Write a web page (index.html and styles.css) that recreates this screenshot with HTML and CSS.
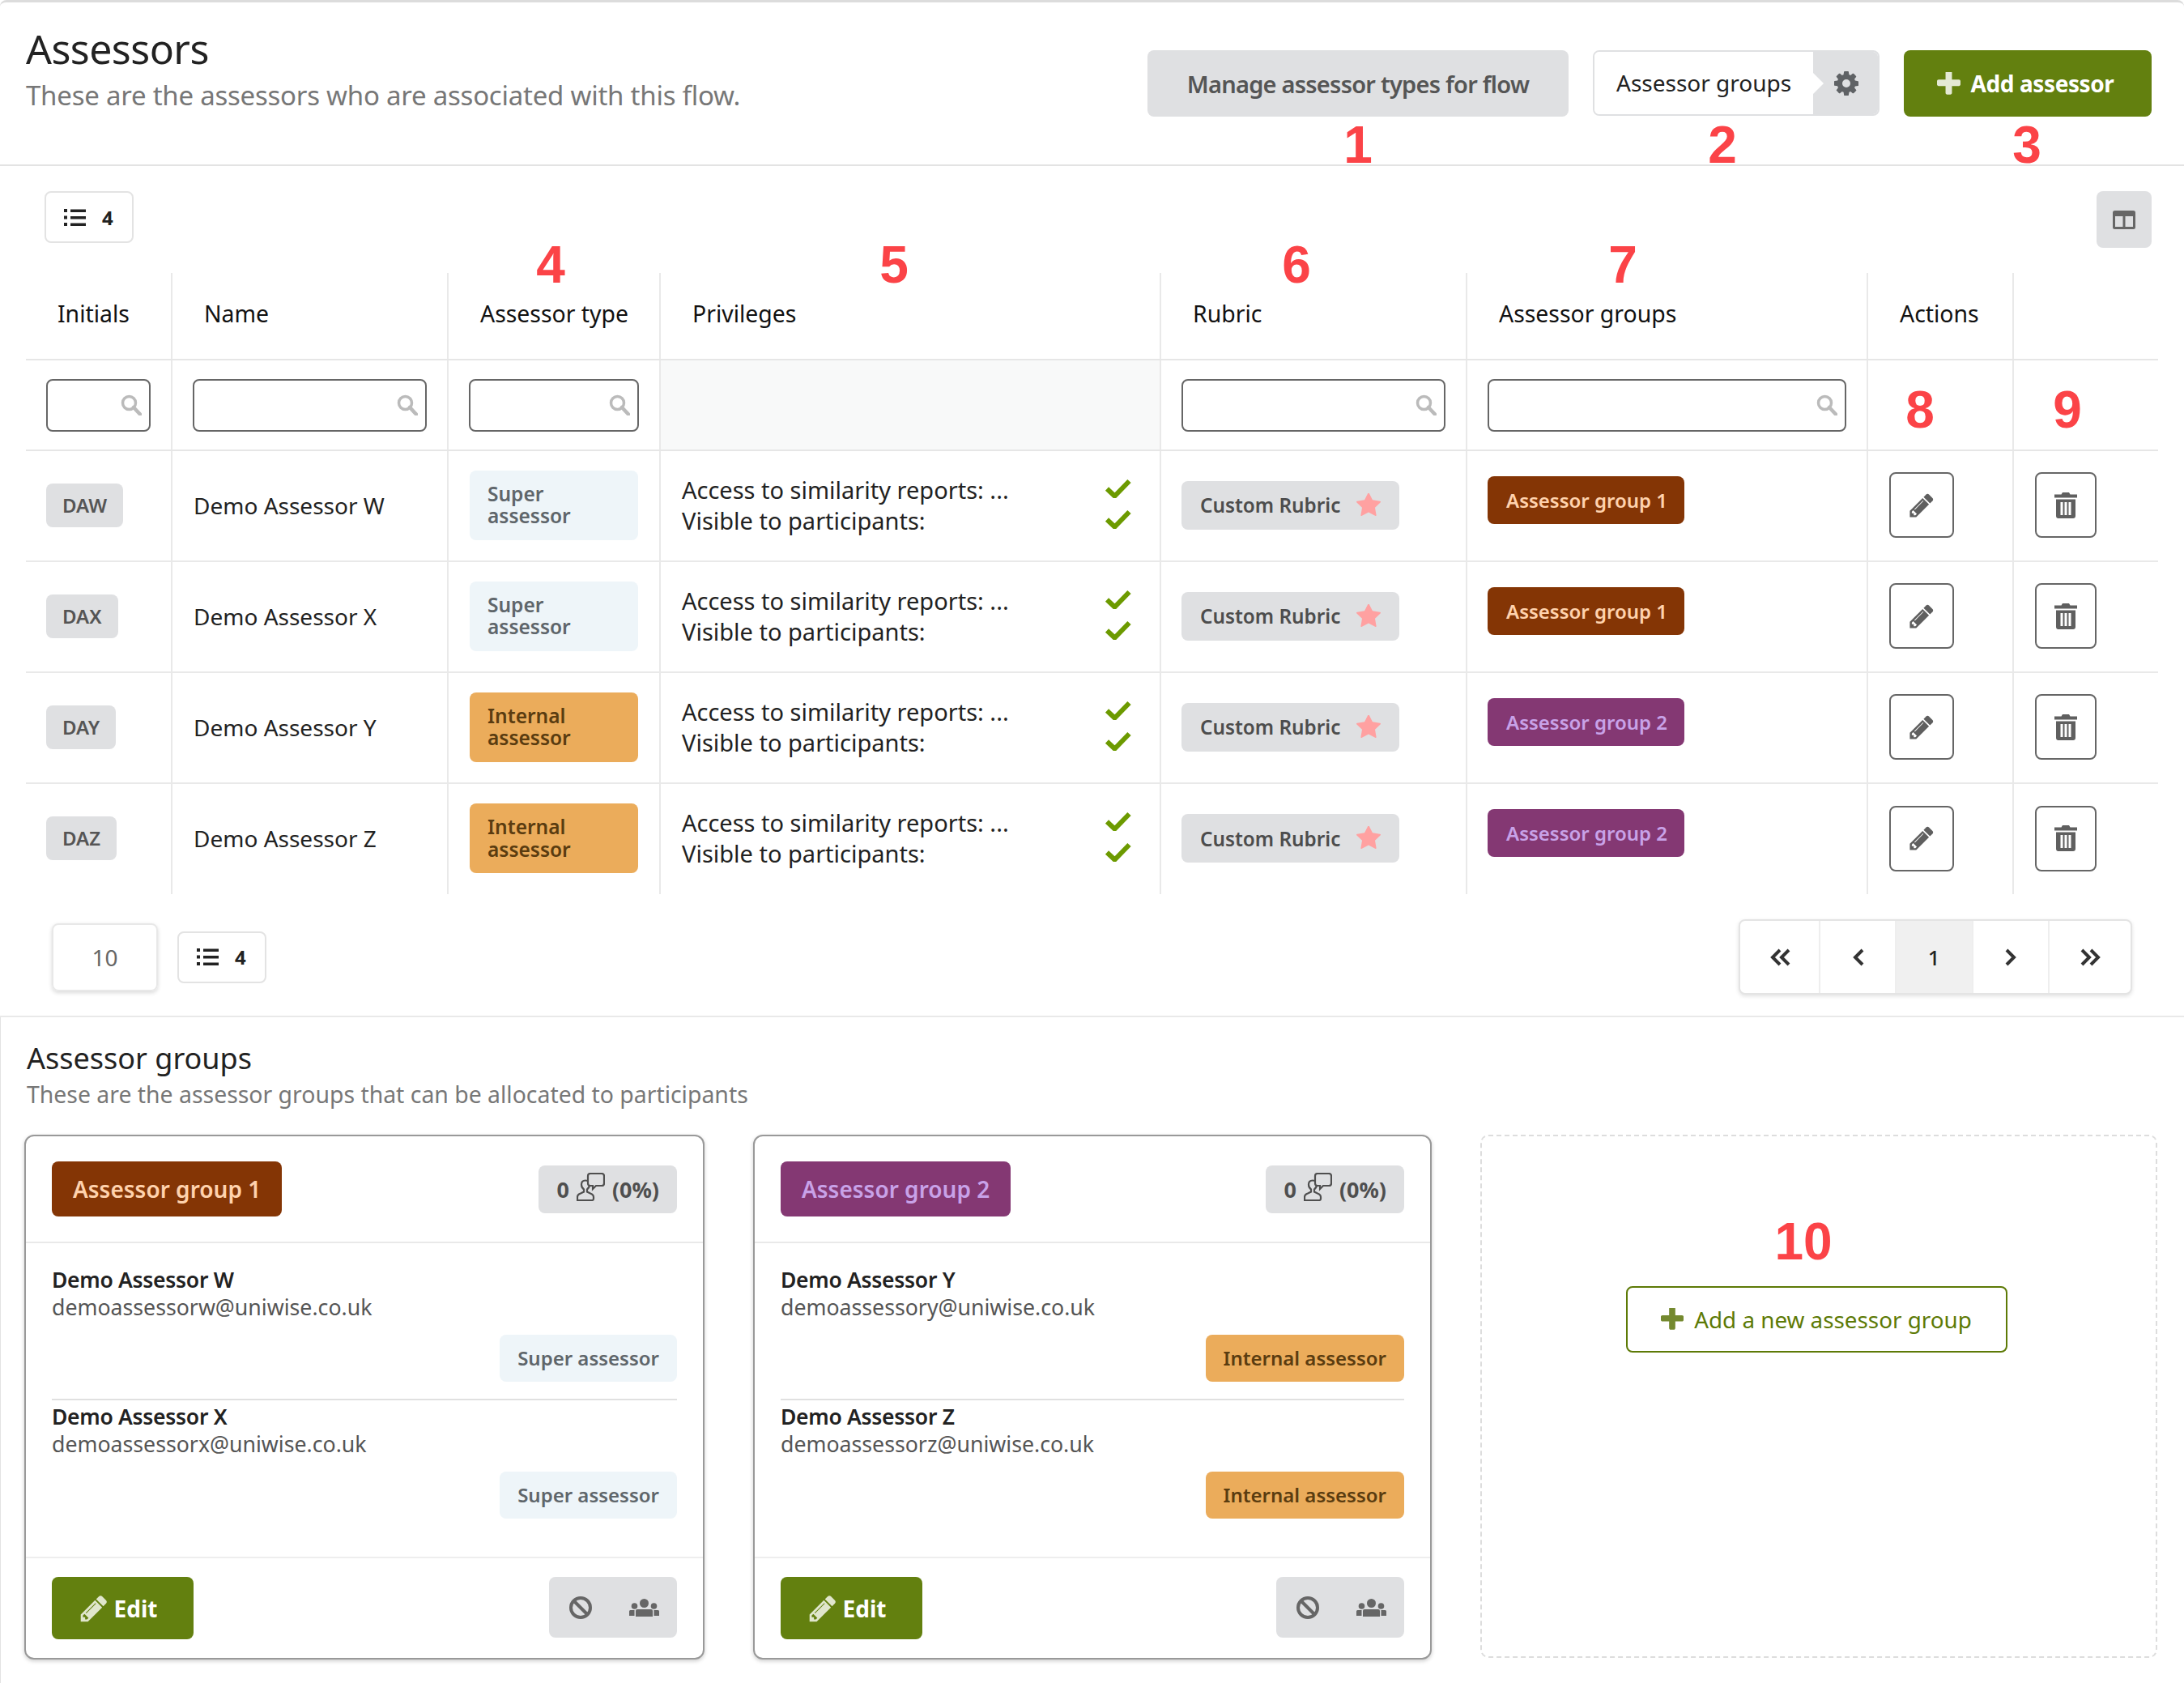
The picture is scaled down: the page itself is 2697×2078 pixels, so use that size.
FILE: index.html
```html
<!DOCTYPE html>
<html lang="en">
<head>
<meta charset="utf-8">
<title>Assessors</title>
<link rel="stylesheet" href="styles.css">
</head>
<body>
<svg class="defs" width="0" height="0" aria-hidden="true">
  <symbol id="i-pencil" viewBox="0 0 1792 1792"><path d="M491 1536l91-91-235-235-91 91v107h128v128h107zm523-928q0-22-22-22-10 0-17 7l-542 542q-7 7-7 17 0 22 22 22 10 0 17-7l542-542q7-7 7-17zm-54-192l416 416-832 832h-416v-416zm683 96q0 53-37 90l-166 166-416-416 166-165q36-38 90-38 53 0 91 38l235 234q37 39 37 91z"/></symbol>
  <symbol id="i-cog" viewBox="128 128 1536 1536"><path d="M1152 896q0-106-75-181t-181-75-181 75-75 181 75 181 181 75 181-75 75-181zm512-109v222q0 12-8 23t-20 13l-185 28q-19 54-39 91 35 50 107 138 10 12 10 25t-9 23q-27 37-99 108t-94 71q-12 0-26-9l-138-108q-44 23-91 38-16 136-29 186-7 28-36 28h-222q-14 0-24.5-8.5t-11.5-21.5l-28-184q-49-16-90-37l-141 107q-10 9-25 9-14 0-25-11-126-114-165-168-7-10-7-23 0-12 8-23 15-21 51-66.5t54-70.5q-27-50-41-99l-183-27q-13-2-21-12.5t-8-23.5v-222q0-12 8-23t19-13l186-28q14-46 39-92-40-57-107-138-10-12-10-24 0-10 9-23 26-36 98.5-107.5t94.5-71.5q13 0 26 10l138 107q44-23 91-38 16-136 29-186 7-28 36-28h222q14 0 24.5 8.5t11.5 21.5l28 184q49 16 90 37l142-107q9-9 24-9 13 0 25 10 129 119 165 170 7 8 7 22 0 12-8 23-15 21-51 66.5t-54 70.5q26 50 41 98l183 28q13 2 21 12.5t8 23.5z"/></symbol>
  <symbol id="i-star" viewBox="64 64 1664 1664"><path d="M1728 647q0 22-26 48l-363 354 86 500q1 7 1 20 0 21-10.5 35.5t-30.5 14.5q-19 0-40-12l-449-236-449 236q-22 12-40 12-21 0-31.5-14.5t-10.5-35.5q0-6 2-20l86-500-364-354q-25-27-25-48 0-37 56-46l502-73 225-455q19-41 49-41t49 41l225 455 502 73q56 9 56 46z"/></symbol>
  <symbol id="i-plus" viewBox="192 192 1408 1408"><path d="M1600 736v192q0 40-28 68t-68 28h-416v416q0 40-28 68t-68 28h-192q-40 0-68-28t-28-68v-416h-416q-40 0-68-28t-28-68v-192q0-40 28-68t68-28h416v-416q0-40 28-68t68-28h192q40 0 68 28t28 68v416h416q40 0 68 28t28 68z"/></symbol>
  <symbol id="i-check" viewBox="0 0 33 24"><path d="M3 12.500l9.500 9L30.500 3" fill="none" stroke="currentColor" stroke-width="6"/></symbol>
  <symbol id="i-trash" viewBox="0 0 28 32"><path d="M10 0h8l1.500 2.500H28v4H0v-4h8.500zM2 8.500h24V29a3 3 0 0 1-3 3H5a3 3 0 0 1-3-3zM7.500 12v16h3V12zM12.500 12v16h3V12zM17.500 12v16h3V12z" fill-rule="evenodd"/></symbol>
  <symbol id="i-search" viewBox="0 0 26 26"><circle cx="10.500" cy="10.500" r="8" fill="none" stroke="currentColor" stroke-width="3.500"/><path d="M16 16l8 8.500" stroke="currentColor" stroke-width="4.500" stroke-linecap="round"/></symbol>
  <symbol id="i-list" viewBox="0 0 27 21"><path d="M0 0h4v4H0zM0 8.500h4v4H0zM0 17h4v4H0zM8 .5h19v3.500H8zM8 9h19v3.500H8zM8 17.500h19V21H8z"/></symbol>
  <symbol id="i-columns" viewBox="0 0 28 23"><path d="M2.500 0h23A2.500 2.500 0 0 1 28 2.500v18a2.500 2.500 0 0 1-2.500 2.500h-23A2.500 2.500 0 0 1 0 20.500v-18A2.500 2.500 0 0 1 2.500 0zM3 7v13h9.500V7zM15.500 7v13H25V7z" fill-rule="evenodd"/></symbol>
  <symbol id="i-ban" viewBox="0 0 28 28"><circle cx="14" cy="14" r="12" fill="none" stroke="currentColor" stroke-width="4"/><path d="M5.500 5.500l17 17" stroke="currentColor" stroke-width="4"/></symbol>
  <symbol id="i-users" viewBox="0 0 37 22"><circle cx="18.500" cy="5.500" r="5.500"/><circle cx="6.500" cy="9" r="3.800"/><circle cx="30.500" cy="9" r="3.800"/><path d="M10 13h17a2 2 0 0 1 2 2v7H8v-7a2 2 0 0 1 2-2zM1.500 14h5v7H0v-5.500a1.500 1.500 0 0 1 1.500-1.500zM30.500 14h5a1.500 1.500 0 0 1 1.500 1.500V21h-6.500z"/></symbol>
  <symbol id="i-talk" viewBox="0 0 35 35"><path d="M1 34v-4q0-3 4-4.500l4-2v-3q-3-2-3-6 0-5 5-5t5 5q0 4-3 6v3l4 2q4 1.500 4 4.500v2q0 2-2 2z" fill="none" stroke="currentColor" stroke-width="2.200"/><path d="M17 1h14q3 0 3 3v9q0 3-3 3h-7l-4 4v-4h-3q-3 0-3-3V4q0-3 3-3z" fill="#dfe0e2" stroke="currentColor" stroke-width="2.200"/></symbol>
  <symbol id="i-first" viewBox="0 0 26 22"><path d="M12 2L3 11l9 9M23 2l-9 9 9 9" fill="none" stroke="currentColor" stroke-width="4"/></symbol>
  <symbol id="i-prev" viewBox="0 0 14 22"><path d="M12 2L3 11l9 9" fill="none" stroke="currentColor" stroke-width="4"/></symbol>
  <symbol id="i-next" viewBox="0 0 14 22"><path d="M2 2l9 9-9 9" fill="none" stroke="currentColor" stroke-width="4"/></symbol>
  <symbol id="i-last" viewBox="0 0 26 22"><path d="M3 2l9 9-9 9M14 2l9 9-9 9" fill="none" stroke="currentColor" stroke-width="4"/></symbol>
</svg>

<div class="page">
  <header class="top">
    <div class="top-text">
      <h1 class="title">Assessors</h1>
      <p class="sub">These are the assessors who are associated with this flow.</p>
    </div>
    <div class="top-actions">
      <button class="btn btn-grey">Manage assessor types for flow</button>
      <div class="split">
        <span class="split-label">Assessor groups</span>
        <span class="split-icon"><svg class="ic-cog"><use href="#i-cog"/></svg></span>
      </div>
      <button class="btn btn-green"><svg class="ic-plus"><use href="#i-plus"/></svg>Add assessor</button>
    </div>
  </header>

  <div class="tools">
    <div class="count"><svg class="ic-list"><use href="#i-list"/></svg><span>4</span></div>
    <button class="col-toggle"><svg class="ic-columns"><use href="#i-columns"/></svg></button>
  </div>

  <table class="grid">
    <colgroup>
      <col class="c1"><col class="c2"><col class="c3"><col class="c4"><col class="c5"><col class="c6"><col class="c7"><col class="c8">
    </colgroup>
    <thead>
      <tr class="head">
        <th>Initials</th><th>Name</th><th>Assessor type</th><th>Privileges</th><th>Rubric</th><th>Assessor groups</th><th>Actions</th><th></th>
      </tr>
      <tr class="filters">
        <td><div class="search"><svg class="ic-search"><use href="#i-search"/></svg></div></td>
        <td><div class="search"><svg class="ic-search"><use href="#i-search"/></svg></div></td>
        <td><div class="search"><svg class="ic-search"><use href="#i-search"/></svg></div></td>
        <td class="blank"></td>
        <td><div class="search"><svg class="ic-search"><use href="#i-search"/></svg></div></td>
        <td><div class="search"><svg class="ic-search"><use href="#i-search"/></svg></div></td>
        <td></td><td></td>
      </tr>
    </thead>
    <tbody>
      <tr>
        <td><span class="initials">DAW</span></td>
        <td class="name">Demo Assessor W</td>
        <td><div class="type super">Super assessor</div></td>
        <td><div class="priv"><span>Access to similarity reports: ...</span><svg class="ic-check"><use href="#i-check"/></svg><span>Visible to participants:</span><svg class="ic-check"><use href="#i-check"/></svg></div></td>
        <td><span class="rubric">Custom Rubric<svg class="ic-star"><use href="#i-star"/></svg></span></td>
        <td class="top-cell"><span class="group g1">Assessor group 1</span></td>
        <td><button class="icon-btn edit"><svg class="ic-pencil"><use href="#i-pencil"/></svg></button></td>
        <td><button class="icon-btn del"><svg class="ic-trash"><use href="#i-trash"/></svg></button></td>
      </tr>
      <tr>
        <td><span class="initials">DAX</span></td>
        <td class="name">Demo Assessor X</td>
        <td><div class="type super">Super assessor</div></td>
        <td><div class="priv"><span>Access to similarity reports: ...</span><svg class="ic-check"><use href="#i-check"/></svg><span>Visible to participants:</span><svg class="ic-check"><use href="#i-check"/></svg></div></td>
        <td><span class="rubric">Custom Rubric<svg class="ic-star"><use href="#i-star"/></svg></span></td>
        <td class="top-cell"><span class="group g1">Assessor group 1</span></td>
        <td><button class="icon-btn edit"><svg class="ic-pencil"><use href="#i-pencil"/></svg></button></td>
        <td><button class="icon-btn del"><svg class="ic-trash"><use href="#i-trash"/></svg></button></td>
      </tr>
      <tr>
        <td><span class="initials">DAY</span></td>
        <td class="name">Demo Assessor Y</td>
        <td><div class="type internal">Internal assessor</div></td>
        <td><div class="priv"><span>Access to similarity reports: ...</span><svg class="ic-check"><use href="#i-check"/></svg><span>Visible to participants:</span><svg class="ic-check"><use href="#i-check"/></svg></div></td>
        <td><span class="rubric">Custom Rubric<svg class="ic-star"><use href="#i-star"/></svg></span></td>
        <td class="top-cell"><span class="group g2">Assessor group 2</span></td>
        <td><button class="icon-btn edit"><svg class="ic-pencil"><use href="#i-pencil"/></svg></button></td>
        <td><button class="icon-btn del"><svg class="ic-trash"><use href="#i-trash"/></svg></button></td>
      </tr>
      <tr>
        <td><span class="initials">DAZ</span></td>
        <td class="name">Demo Assessor Z</td>
        <td><div class="type internal">Internal assessor</div></td>
        <td><div class="priv"><span>Access to similarity reports: ...</span><svg class="ic-check"><use href="#i-check"/></svg><span>Visible to participants:</span><svg class="ic-check"><use href="#i-check"/></svg></div></td>
        <td><span class="rubric">Custom Rubric<svg class="ic-star"><use href="#i-star"/></svg></span></td>
        <td class="top-cell"><span class="group g2">Assessor group 2</span></td>
        <td><button class="icon-btn edit"><svg class="ic-pencil"><use href="#i-pencil"/></svg></button></td>
        <td><button class="icon-btn del"><svg class="ic-trash"><use href="#i-trash"/></svg></button></td>
      </tr>
    </tbody>
  </table>

  <div class="pager">
    <div class="pager-left">
      <div class="size">10</div>
      <div class="count"><svg class="ic-list"><use href="#i-list"/></svg><span>4</span></div>
    </div>
    <nav class="pages">
      <span class="pg p-a"><svg class="ic-dbl"><use href="#i-first"/></svg></span>
      <span class="pg p-b p-prev"><svg class="ic-sgl"><use href="#i-prev"/></svg></span>
      <span class="pg p-b current">1</span>
      <span class="pg p-b"><svg class="ic-sgl"><use href="#i-next"/></svg></span>
      <span class="pg p-c"><svg class="ic-dbl"><use href="#i-last"/></svg></span>
    </nav>
  </div>

  <section class="groups">
    <h2 class="groups-title">Assessor groups</h2>
    <p class="groups-sub">These are the assessor groups that can be allocated to participants</p>
    <div class="cards">
      <article class="card">
        <div class="card-head">
          <span class="big-group g1">Assessor group 1</span>
          <span class="stat">0<svg class="ic-talk"><use href="#i-talk"/></svg>(0%)</span>
        </div>
        <div class="card-body">
          <div class="member">
            <div class="m-name">Demo Assessor W</div>
            <div class="m-mail">demoassessorw@uniwise.co.uk</div>
            <div class="m-row"><span class="m-type super">Super assessor</span></div>
          </div>
          <div class="member">
            <div class="m-name">Demo Assessor X</div>
            <div class="m-mail">demoassessorx@uniwise.co.uk</div>
            <div class="m-row"><span class="m-type super">Super assessor</span></div>
          </div>
        </div>
        <div class="card-foot">
          <button class="btn-edit"><svg class="ic-pen-w"><use href="#i-pencil"/></svg>Edit</button>
          <div class="foot-icons"><svg class="ic-ban"><use href="#i-ban"/></svg><svg class="ic-users"><use href="#i-users"/></svg></div>
        </div>
      </article>
      <article class="card">
        <div class="card-head">
          <span class="big-group g2">Assessor group 2</span>
          <span class="stat">0<svg class="ic-talk"><use href="#i-talk"/></svg>(0%)</span>
        </div>
        <div class="card-body">
          <div class="member">
            <div class="m-name">Demo Assessor Y</div>
            <div class="m-mail">demoassessory@uniwise.co.uk</div>
            <div class="m-row"><span class="m-type internal">Internal assessor</span></div>
          </div>
          <div class="member">
            <div class="m-name">Demo Assessor Z</div>
            <div class="m-mail">demoassessorz@uniwise.co.uk</div>
            <div class="m-row"><span class="m-type internal">Internal assessor</span></div>
          </div>
        </div>
        <div class="card-foot">
          <button class="btn-edit"><svg class="ic-pen-w"><use href="#i-pencil"/></svg>Edit</button>
          <div class="foot-icons"><svg class="ic-ban"><use href="#i-ban"/></svg><svg class="ic-users"><use href="#i-users"/></svg></div>
        </div>
      </article>
      <div class="add-box">
        <button class="btn-add-group"><svg class="ic-plus-g"><use href="#i-plus"/></svg>Add a new assessor group</button>
      </div>
    </div>
  </section>

  <span class="mark n1">1</span>
  <span class="mark n2">2</span>
  <span class="mark n3">3</span>
  <span class="mark n4">4</span>
  <span class="mark n5">5</span>
  <span class="mark n6">6</span>
  <span class="mark n7">7</span>
  <span class="mark n8">8</span>
  <span class="mark n9">9</span>
  <span class="mark n10">10</span>
</div>
</body>
</html>
```

FILE: styles.css
```css
* { box-sizing: border-box; }
html, body { margin: 0; padding: 0; background: #fff; }
body { font-family: "Noto Sans", "Open Sans", sans-serif; color: #222; }
svg { fill: currentColor; display: block; flex: none; }
.defs { position: absolute; }
button { font-family: inherit; margin: 0; cursor: pointer; }
.page { position: relative; width: 2697px; height: 2078px; overflow: hidden; }

/* header */
.top { height: 205px; border-top: 3px solid #dcdcdc; border-bottom: 2px solid #e3e3e3; border-radius: 8px 8px 0 0; padding: 0 40px 0 32px; display: flex; justify-content: space-between; }
.top-text { padding-top: 28px; }
.title { margin: 0; font-size: 50px; line-height: 58px; font-weight: 400; color: #222; letter-spacing: -.55px; }
.sub { margin: 7px 0 0; font-size: 33px; line-height: 44px; color: #777; letter-spacing: -.24px; }
.top-actions { display: flex; align-items: flex-start; gap: 30px; padding-top: 59px; }
.btn { border: 0; height: 82px; border-radius: 8px; font-size: 28px; display: inline-flex; align-items: center; justify-content: center; }
.btn-grey { width: 520px; background: #dfe0e2; color: #555; font-size: 29px; font-weight: 600; letter-spacing: -.75px; }
.btn-green { width: 306px; padding: 0 6px 0 0; background: #63800f; color: #fff; font-weight: 700; gap: 13px; letter-spacing: -.4px; }
.ic-plus { width: 29px; height: 29px; color: #e4e9d5; }
.split { width: 354px; height: 81px; display: flex; border: 2px solid #dfe0e2; border-radius: 8px; overflow: hidden; }
.split-label { width: 270px; padding-left: 27px; font-size: 28px; line-height: 76px; color: #222; background: #fff; position: relative; }
.split-label::after { content: ""; position: absolute; right: -13px; top: 26px; border-left: 13px solid #fff; border-top: 13px solid transparent; border-bottom: 13px solid transparent; }
.split-icon { flex: 1; background: #dfe0e2; display: flex; align-items: center; justify-content: flex-end; padding-right: 24px; }
.ic-cog { width: 30px; height: 30px; color: #5f6265; }

/* toolbar */
.tools { height: 132px; padding: 31px 40px 0 55px; display: flex; justify-content: space-between; align-items: flex-start; }
.count { width: 110px; height: 64px; border: 2px solid #e3e3e3; border-radius: 8px; display: flex; align-items: center; padding-left: 22px; gap: 20px; font-size: 24px; font-weight: 700; color: #222; }
.ic-list { width: 27px; height: 21px; }
.col-toggle { width: 68px; height: 70px; border: 0; border-radius: 8px; background: #dfe0e2; color: #666; display: flex; align-items: center; justify-content: center; padding: 0; }
.ic-columns { width: 28px; height: 23px; }

/* table */
.grid { margin-left: 32px; width: 2633px; table-layout: fixed; border-collapse: collapse; font-size: 28px; }
.c1 { width: 180px; } .c2 { width: 341px; } .c3 { width: 262px; } .c4 { width: 618px; }
.c5 { width: 378px; } .c6 { width: 495px; } .c7 { width: 180px; } .c8 { width: 179px; }
.grid th, .grid td { border-right: 2px solid #e9e9e9; padding: 0 26px 2px; vertical-align: middle; }
.grid th:last-child, .grid td:last-child { border-right: 0; }
.grid th { height: 107px; text-align: left; font-size: 28.400px; font-weight: 400; padding: 0 0 6px 39px; color: #111; border-bottom: 2px solid #e6e6e6; }
.filters td { height: 112px; padding: 0 25px; border-bottom: 2px solid #e6e6e6; }
.filters .blank { background: #f8f9f9; }
tbody tr { height: 137px; }
tbody tr td { border-bottom: 2px solid #e9e9e9; }
tbody tr:last-child td { border-bottom: 0; }
.search { height: 65px; border: 2px solid #666; border-radius: 8px; display: flex; align-items: center; justify-content: flex-end; padding-right: 9px; }
.ic-search { width: 26px; height: 26px; color: #bbb; }
.initials { display: inline-block; height: 54px; line-height: 54px; padding: 0 20px; margin-left: -1px; border-radius: 8px; background: #dfe0e2; color: #555; font-size: 24px; font-weight: 600; }
.name { color: #222; }
.type { height: 86px; padding: 15px 22px 0; border-radius: 8px; font-size: 24.500px; line-height: 27.500px; font-weight: 600; }
.super { background: #eef5f9; color: #5f666b; }
.internal { background: #ebac5b; color: #5a3c10; }
.priv { display: grid; grid-template-columns: 1fr 33px; row-gap: 0; align-items: center; line-height: 38px; color: #222; padding-right: 9px; font-size: 29px; }
.ic-check { width: 33px; height: 24px; margin-bottom: 4px; color: #6c9a00; }
.rubric { display: inline-flex; align-items: center; height: 60px; width: 269px; padding: 0 23px; margin-left: -1px; border-radius: 8px; background: #dfe0e2; color: #4d4d4d; font-size: 24.300px; font-weight: 600; justify-content: space-between; }
.ic-star { width: 30px; height: 30px; color: #ffa1a1; }
.top-cell { vertical-align: top !important; padding-top: 31px !important; }
.group { display: inline-block; height: 59px; line-height: 59px; width: 243px; padding-left: 23px; margin-left: -1px; border-radius: 8px; font-size: 24px; font-weight: 600; white-space: nowrap; }
.g1 { background: #843505; color: #ffd2ad; }
.g2 { background: #843873; color: #c8a2e8; }
.icon-btn { display: flex; align-items: center; justify-content: center; height: 81px; background: #fff; border: 2px solid #666; border-radius: 8px; color: #5f5f5f; padding: 0; }
.edit { width: 80px; }
.del { width: 76px; }
.ic-pencil { width: 34px; height: 34px; }
.ic-trash { width: 28px; height: 32px; }

/* pager */
.pager { height: 152px; padding: 5px 64px 0; display: flex; justify-content: space-between; align-items: center; border-bottom: 2px solid #e9e9e9; }
.pager-left { display: flex; align-items: center; gap: 24px; }
.size { width: 131px; height: 84px; border: 2px solid #e8e8e8; border-radius: 8px; box-shadow: 0 2px 5px rgba(0,0,0,.15); text-align: center; line-height: 80px; font-size: 28px; color: #666; }
.pages { display: flex; height: 93px; border: 2px solid #e4e4e4; border-radius: 8px; box-shadow: 0 2px 5px rgba(0,0,0,.12); overflow: hidden; background: #fff; }
.pg { display: flex; align-items: center; justify-content: center; border-right: 2px solid #eee; font-size: 26px; color: #222; font-weight: 500; }
.pg:last-child { border-right: 0; }
.p-a { width: 99px; padding-left: 4px; } .p-b { width: 94.500px; } .p-c { width: 100px; }
.p-prev { padding-left: 3px; }
.current { background: #f0f0f0; }
.ic-dbl { width: 26px; height: 22px; color: #333; }
.ic-sgl { width: 14px; height: 22px; color: #333; }

/* groups */
.groups { height: 824px; padding: 28px 33px 0 29px; border-left: 1px solid #e3e3e3; }
.groups-title { margin: 0 0 0 3px; font-size: 36px; line-height: 46px; font-weight: 400; color: #222; }
.groups-sub { margin: 0 0 0 3px; font-size: 28.400px; line-height: 42px; color: #777; }
.cards { margin-top: 29px; display: grid; grid-template-columns: 840px 838px 1fr; gap: 60px; height: 648px; }
.card { display: flex; flex-direction: column; border: 2px solid #999; border-radius: 12px; box-shadow: 0 2px 5px rgba(0,0,0,.2); background: #fff; }
.card-head { height: 132px; padding: 0 32px; border-bottom: 2px solid #e9e9e9; display: flex; justify-content: space-between; align-items: center; }
.big-group { height: 68px; line-height: 68px; padding: 0 26px; border-radius: 8px; font-size: 28px; font-weight: 600; white-space: nowrap; }
.stat { display: flex; align-items: center; height: 59px; padding: 0 22px; gap: 9px; border-radius: 8px; background: #dfe0e2; color: #4f4f4f; font-size: 27px; font-weight: 700; }
.ic-talk { width: 35px; height: 35px; margin-top: -6px; }
.card-body { flex: 1; padding: 28px 32px 0; }
.member { height: 164px; }
.member + .member { border-top: 2px solid #e0e0e0; height: 166px; padding-top: 3px; }
.m-name { font-size: 26.500px; line-height: 34px; font-weight: 600; color: #222; letter-spacing: -.3px; }
.m-mail { font-size: 26.700px; line-height: 34px; color: #555; }
.m-row { display: flex; justify-content: flex-end; margin-top: 17px; }
.m-type { height: 58px; line-height: 58px; padding: 0 22px; border-radius: 8px; font-size: 24px; font-weight: 600; }
.card-foot { height: 125px; padding: 23px 32px 0; border-top: 2px solid #eee; display: flex; justify-content: space-between; align-items: flex-start; }
.btn-edit { width: 175px; height: 77px; border: 0; border-radius: 8px; background: #63800f; color: #fff; font-size: 28px; font-weight: 700; display: flex; align-items: center; justify-content: center; gap: 6px; padding: 0 12px 0 0; }
.ic-pen-w { width: 38px; height: 38px; color: #e0e6cc; }
.foot-icons { width: 158px; height: 75px; border-radius: 8px; background: #dfe0e2; color: #666; display: flex; align-items: center; justify-content: space-between; padding: 0 22px 0 25px; }
.ic-ban { width: 28px; height: 28px; }
.ic-users { width: 37px; height: 22px; }
.add-box { height: 646px; border: 2px dashed #ddd; border-radius: 10px; display: flex; justify-content: center; align-items: flex-start; padding: 185px 6px 0 0; }
.btn-add-group { width: 471px; height: 82px; background: #fff; border: 2px solid #5d7a06; border-radius: 8px; color: #5d7a06; font-size: 27.800px; display: flex; align-items: center; justify-content: center; gap: 13px; padding: 0; }
.ic-plus-g { width: 28px; height: 28px; color: #74892f; }

/* numbered callouts on top of the screenshot */
.mark { position: absolute; transform: translateX(-50%); font-family: "Liberation Sans", Arial, sans-serif; font-weight: 700; font-size: 64px; line-height: 46px; color: #fb4347; }
.n1 { left: 1677px; top: 156px; }
.n2 { left: 2127px; top: 156px; }
.n3 { left: 2503px; top: 156px; }
.n4 { left: 680px; top: 304px; }
.n5 { left: 1104px; top: 304px; }
.n6 { left: 1601px; top: 304px; }
.n7 { left: 2004px; top: 304px; }
.n8 { left: 2371px; top: 483px; }
.n9 { left: 2553px; top: 483px; }
.n10 { left: 2227px; top: 1510px; }
```
